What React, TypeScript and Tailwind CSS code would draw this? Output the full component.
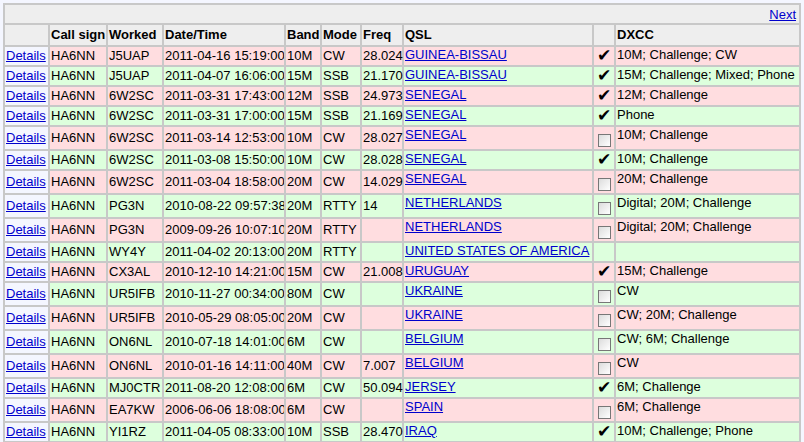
const rows: any[] = [
["J5UAP","2011-04-16 15:19:00","10M","CW","28.024","GUINEA-BISSAU",1,"10M; Challenge; CW",true],
["J5UAP","2011-04-07 16:06:00","15M","SSB","21.170","GUINEA-BISSAU",1,"15M; Challenge; Mixed; Phone",false],
["6W2SC","2011-03-31 17:43:00","12M","SSB","24.973","SENEGAL",1,"12M; Challenge",true],
["6W2SC","2011-03-31 17:00:00","15M","SSB","21.169","SENEGAL",1,"Phone",false],
["6W2SC","2011-03-14 12:53:00","10M","CW","28.027","SENEGAL",2,"10M; Challenge",true],
["6W2SC","2011-03-08 15:50:00","10M","CW","28.028","SENEGAL",1,"10M; Challenge",false],
["6W2SC","2011-03-04 18:58:00","20M","CW","14.029","SENEGAL",2,"20M; Challenge",true],
["PG3N","2010-08-22 09:57:38","20M","RTTY","14","NETHERLANDS",2,"Digital; 20M; Challenge",false],
["PG3N","2009-09-26 10:07:10","20M","RTTY","","NETHERLANDS",2,"Digital; 20M; Challenge",true],
["WY4Y","2011-04-02 20:13:00","20M","RTTY","","UNITED STATES OF AMERICA",0,"",false],
["CX3AL","2010-12-10 14:21:00","15M","CW","21.008","URUGUAY",1,"15M; Challenge",true],
["UR5IFB","2010-11-27 00:34:00","80M","CW","","UKRAINE",2,"CW",false],
["UR5IFB","2010-05-29 08:05:00","20M","CW","","UKRAINE",2,"CW; 20M; Challenge",true],
["ON6NL","2010-07-18 14:01:00","6M","CW","","BELGIUM",2,"CW; 6M; Challenge",false],
["ON6NL","2010-01-16 14:11:00","40M","CW","7.007","BELGIUM",2,"CW",true],
["MJ0CTR","2011-08-20 12:08:00","6M","CW","50.094","JERSEY",1,"6M; Challenge",false],
["EA7KW","2006-06-06 18:08:00","6M","CW","","SPAIN",2,"6M; Challenge",true],
["YI1RZ","2011-04-05 08:33:00","10M","SSB","28.470","IRAQ",1,"10M; Challenge; Phone",false],
];

export default function App() {
  return (
    <div className="w-[804px] h-[442px] overflow-hidden bg-[#f4f6ff] pt-[3px] pl-[3px] text-[13px] leading-[16px] text-black whitespace-nowrap" style={{fontFamily:'"Liberation Sans", Arial, sans-serif'}}>
      <table className="table-fixed border-separate border-spacing-[2px] bg-[#c8c8c8] w-[798px]">
        <colgroup>
          <col className="w-[43px]" /><col className="w-[56px]" /><col className="w-[54px]" /><col className="w-[120px]" />
          <col className="w-[34px]" /><col className="w-[38px]" /><col className="w-[40px]" /><col className="w-[188px]" />
          <col className="w-[20px]" /><col />
        </colgroup>
        <tbody>
          <tr>
            <td colSpan={10} className="bg-[#eeeeee] h-[18px] text-right pr-[3px] align-bottom">
              <a className="text-[#0000cc] underline" href="#">Next</a>
            </td>
          </tr>
          <tr className="bg-[#eeeeee] font-bold h-[20px]">
            <td></td>
            <td className="px-[1px] overflow-hidden">Call sign</td>
            <td className="px-[1px]">Worked</td>
            <td className="px-[1px]">Date/Time</td>
            <td className="px-[1px]">Band</td>
            <td className="px-[1px]">Mode</td>
            <td className="px-[1px]">Freq</td>
            <td className="px-[1px]">QSL</td>
            <td></td>
            <td className="px-[1px]">DXCC</td>
          </tr>
          {rows.map((r, i) => {
            const bg = r[8] ? "bg-[#ffdde0]" : "bg-[#ddffdd]";
            const h = r[6] === 2 ? "h-[22px]" : "h-[18px]";
            return (
              <tr key={i} className={h}>
                <td className="bg-[#f4f6ff] px-[1px]"><a href="#" className="text-[#0000cc] underline">Details</a></td>
                <td className={`${bg} px-[1px]`}>HA6NN</td>
                <td className={`${bg} px-[1px]`}>{r[0]}</td>
                <td className={`${bg} px-[1px] overflow-hidden`}>{r[1]}</td>
                <td className={`${bg} px-[1px]`}>{r[2]}</td>
                <td className={`${bg} px-[1px]`}>{r[3]}</td>
                <td className={`${bg} px-[1px]`}>{r[4]}</td>
                <td className={`${bg} px-[1px] align-top overflow-hidden`}><a href="#" className="text-[#0000cc] underline">{r[5]}</a></td>
                <td className={`${bg} text-center p-0`}>
                  {r[6] === 1 && <span className="text-[17px] leading-[16px]" style={{fontFamily:'"DejaVu Sans", sans-serif'}}>✔</span>}
                  {r[6] === 2 && <span className="inline-block align-middle mt-[4px] w-[13px] h-[13px] border border-[#777] bg-gradient-to-br from-[#dcdcdc] to-white"></span>}
                </td>
                <td className={`${bg} px-[1px] align-top overflow-hidden`}>{r[7]}</td>
              </tr>
            );
          })}
        </tbody>
      </table>
    </div>
  );
}
